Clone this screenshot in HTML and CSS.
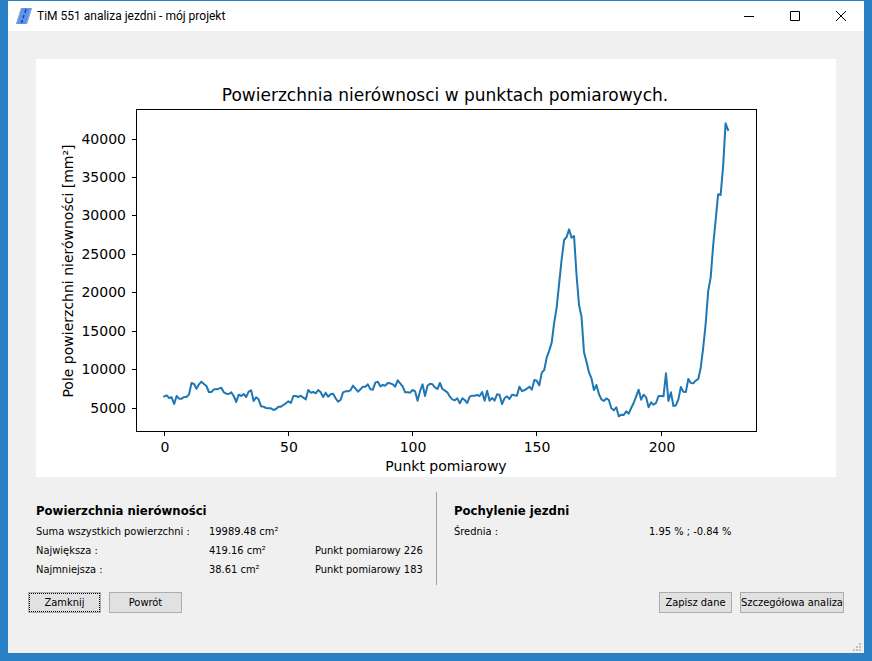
FILE: index.html
```html
<!DOCTYPE html>
<html lang="pl">
<head>
<meta charset="utf-8">
<title>TiM 551 analiza jezdni - mój projekt</title>
<link rel="stylesheet" href="styles.css">
</head>
<body>
<div class="window">
  <header class="titlebar">
    <svg class="app-icon" viewBox="0 0 16 16" aria-hidden="true">
      <path d="M5 0H16L11 16H0Z" fill="#5b92f5"/>
      <path d="M5 0H6L1 16H0ZM15 0H16L11 16H10Z" fill="#a3aab8"/>
      <path d="M10 1L9 5M8 7L7 10M6.500 12L5.500 15" stroke="#2a4676" stroke-width="1.500"/>
    </svg>
    <h1 class="caption">TiM 551 analiza jezdni - mój projekt</h1>
    <div class="window-controls">
      <button class="control" type="button" aria-label="Minimalizuj"><svg viewBox="0 0 12 12"><path d="M1 6.500H11"/></svg></button>
      <button class="control" type="button" aria-label="Maksymalizuj"><svg viewBox="0 0 12 12"><path d="M1.500 1.500H10.500V10.500H1.500Z"/></svg></button>
      <button class="control" type="button" aria-label="Zakończ"><svg viewBox="0 0 12 12"><path d="M1 1L11 11M11 1L1 11"/></svg></button>
    </div>
  </header>
  <main class="content">
    <svg class="chart" viewBox="36 59 800 418" role="img" aria-labelledby="chart-title">
      <text id="chart-title" class="chart-title" x="445" y="101">Powierzchnia nierównosci w punktach pomiarowych.</text>
      <rect class="frame" x="136.500" y="109.500" width="620" height="322"/>
      <g id="ticks"></g>
      <polyline id="series" class="series"/>
      <text class="axis-label" x="446" y="471">Punkt pomiarowy</text>
      <text class="axis-label" transform="translate(73 271) rotate(-90)">Pole powierzchni nierówności [mm²]</text>
    </svg>
    <div class="details">
      <section class="panel panel-area">
        <h2>Powierzchnia nierówności</h2>
        <table>
          <tr><th class="label" scope="row">Suma wszystkich powierzchni :</th><td class="value">19989.48 cm²</td><td></td></tr>
          <tr><th class="label" scope="row">Największa :</th><td class="value">419.16 cm²</td><td>Punkt pomiarowy 226</td></tr>
          <tr><th class="label" scope="row">Najmniejsza :</th><td class="value">38.61 cm²</td><td>Punkt pomiarowy 183</td></tr>
        </table>
      </section>
      <section class="panel panel-slope">
        <h2>Pochylenie jezdni</h2>
        <table>
          <tr><th class="label" scope="row">Średnia :</th><td>1.95 % ; -0.84 %</td></tr>
        </table>
      </section>
    </div>
    <div class="actions">
      <button class="button is-focused" type="button">Zamknij</button>
      <button class="button" type="button">Powrót</button>
      <button class="button push" type="button">Zapisz dane</button>
      <button class="button wide" type="button">Szczegółowa analiza</button>
    </div>
  </main>
  <svg class="grip" viewBox="0 0 8 8" aria-hidden="true"><path d="M6 0h2v2H6zM3 3h2v2H3zM6 3h2v2H6zM0 6h2v2H0zM3 6h2v2H3zM6 6h2v2H6z"/></svg>
</div>
<script src="chart.js"></script>
</body>
</html>
```
FILE: styles.css
```css
* { box-sizing: border-box; }

body {
  margin: 0;
  min-height: 100vh;
  padding: 1px 8px 8px;
  display: flex;
  background: #2a80c4;
  color: #000;
  font: 11px/19px "DejaVu Sans Condensed", Tahoma, sans-serif;
}

.window {
  position: relative;
  flex: 1;
  min-width: 0;
  display: flex;
  flex-direction: column;
  background: #f0f0f0;
}

.titlebar {
  display: flex;
  align-items: center;
  height: 30px;
  padding-left: 8px;
  background: #fff;
}

.app-icon { width: 16px; height: 16px; }

.caption {
  flex: 1;
  margin: 0 0 0 5px;
  font: 12px/16px Roboto, "Segoe UI", sans-serif;
}

.window-controls { display: flex; }

.control {
  display: grid;
  place-items: center;
  width: 46px;
  height: 30px;
  padding: 0;
  border: 0;
  background: none;
}

.control svg {
  width: 12px;
  height: 12px;
  fill: none;
  stroke: #000;
}

.content { padding: 28px 20px 0; }

.chart {
  display: block;
  width: calc(100% - 16px);
  margin-left: 8px;
  background: #fff;
  font-family: "DejaVu Sans", sans-serif;
  font-size: 14px;
}

.chart-title { font-size: 17px; text-anchor: middle; }
.axis-label, .tick-x { text-anchor: middle; }
.tick-y { text-anchor: end; }
.frame, .tick { fill: none; stroke: #000; }

.series {
  fill: none;
  stroke: #1f77b4;
  stroke-width: 2;
  stroke-linejoin: round;
  stroke-linecap: square;
}

.details {
  display: grid;
  grid-template-columns: 1fr 1fr;
  margin: 15px 8px 7px;
}

.panel { height: 93px; padding-top: 9px; }
.panel-slope { padding-left: 17px; border-left: 1px solid #a0a0a0; }

h2 {
  margin: 0 0 1px;
  font-size: 13px;
  line-height: 20px;
}

table { border-collapse: collapse; }
th, td { padding: 0; font-weight: 400; text-align: left; white-space: nowrap; }
.panel-area .label { width: 173px; }
.panel-area .value { width: 106px; }
.panel-slope .label { width: 195px; }

.actions { display: flex; gap: 8px; }

.button {
  width: 73px;
  height: 21px;
  padding: 0;
  border: 1px solid #adadad;
  background: #e1e1e1;
  color: #000;
  font: inherit;
  white-space: nowrap;
}

.is-focused { outline: 1px dotted #000; outline-offset: -2px; }
.push { margin-left: auto; }
.wide { width: 104px; }

.grip {
  position: absolute;
  right: 3px;
  bottom: 2px;
  width: 8px;
  height: 8px;
  fill: #bfbfbf;
}
```
FILE: chart.js
```js
// Plot heights, one per measuring point, in thirds of a unit below y = 360.
const heights = [
  109, 106, 114, 112, 132, 108, 116, 116, 111, 111, 103, 69, 72, 86, 73, 65, 72, 78, 96, 96,
  88, 88, 86, 83, 97, 101, 102, 97, 108, 126, 104, 108, 102, 111, 95, 91, 123, 112, 118, 139,
  140, 144, 145, 145, 150, 147, 140, 140, 135, 130, 124, 129, 108, 108, 111, 107, 113, 118, 90, 98,
  96, 100, 90, 97, 111, 98, 110, 103, 101, 115, 125, 120, 97, 94, 94, 91, 77, 86, 95, 88,
  80, 80, 73, 88, 89, 68, 65, 79, 75, 77, 69, 70, 73, 80, 61, 70, 79, 97, 97, 98,
  90, 94, 122, 93, 73, 108, 77, 71, 73, 82, 87, 69, 87, 92, 97, 110, 118, 121, 115, 130,
  115, 120, 129, 110, 107, 107, 105, 108, 96, 122, 92, 122, 114, 122, 103, 104, 132, 115, 109, 117,
  104, 106, 107, 80, 93, 91, 86, 80, 89, 60, 62, 76, 38, 30, -8, -28, -52, -112, -158, -230,
  -302, -360, -369, -392, -367, -372, -255, -165, -130, -23, 5, 37, 55, 90, 75, 102, 118, 123, 115, 120,
  145, 151, 142, 169, 164, 165, 154, 161, 144, 129, 109, 89, 119, 104, 112, 142, 127, 134, 129, 108,
  108, 109, 40, 123, 97, 138, 136, 118, 81, 95, 96, 57, 69, 70, 62, 57, 23, -38, -110, -207,
  -248, -343, -420, -497, -495, -580, -710, -690
];

const xAt = (point) => 164.2 + point * 2.484;
const yAt = (value) => 446.5 - value * 0.007686;

document.getElementById("series").setAttribute(
  "points",
  heights.map((h, i) => `${xAt(i).toFixed(2)},${(360 + h / 3).toFixed(2)}`).join(" ")
);

let marks = "";
for (let v = 5000; v <= 40000; v += 5000) {
  const y = Math.floor(yAt(v));
  marks += `<path class="tick" d="M132 ${y + 0.5}H136"/><text class="tick-y" x="126" y="${y + 5}">${v}</text>`;
}
for (let p = 0; p <= 200; p += 50) {
  const x = Math.floor(xAt(p));
  marks += `<path class="tick" d="M${x + 0.5} 432V436"/><text class="tick-x" x="${x + 1}" y="452">${p}</text>`;
}
document.getElementById("ticks").innerHTML = marks;
```
